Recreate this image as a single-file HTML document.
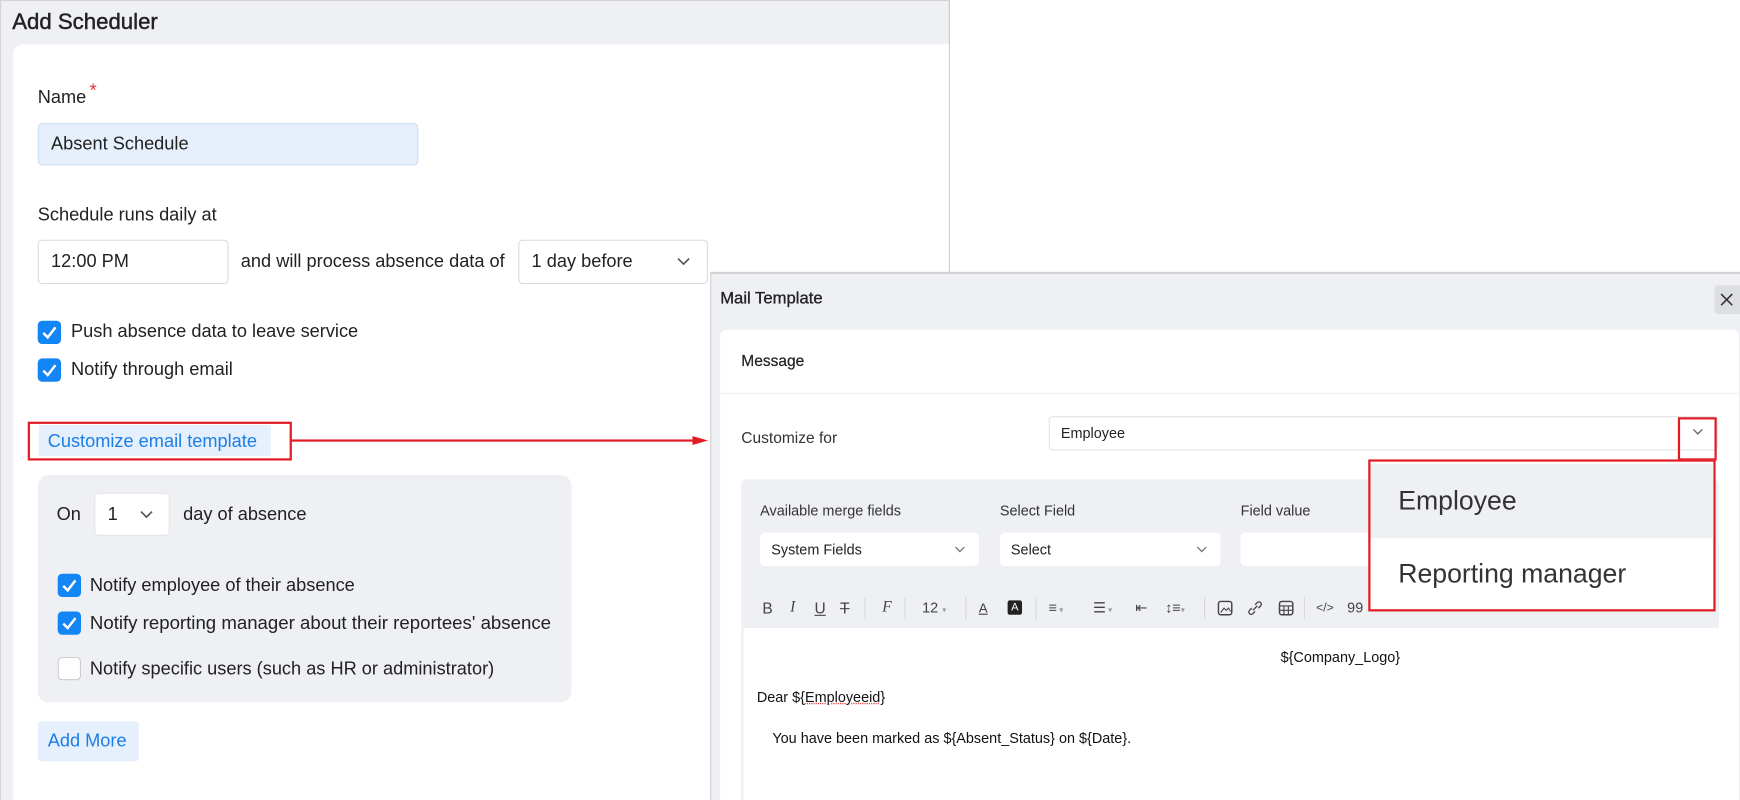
<!DOCTYPE html>
<html><head><meta charset="utf-8"><style>
*{box-sizing:border-box;margin:0;padding:0}
html,body{width:1740px;height:800px;overflow:hidden;background:#fff;font-family:"Liberation Sans",sans-serif;color:#222}
#w{position:absolute;left:0;top:0;width:1568px;height:721px;transform:scale(1.1097);transform-origin:0 0}
.a{position:absolute}
.t{position:absolute;white-space:nowrap;line-height:1;transform:translateY(-50%)}
.L{font-size:16.4px !important}
.cb{position:absolute;width:21px;height:21px;border-radius:4px;background:#1485f5}
.cb svg{position:absolute;left:3px;top:4px}
.cb.off{background:#fff;border:1.5px solid #ccc}
.inp{position:absolute;background:#fff;border:1px solid #d9dbe0;border-radius:4px}
.chev{position:absolute}
.tb{position:absolute;top:540px;font-size:14px;color:#444;line-height:16px}
.sep{position:absolute;top:538px;width:1px;height:20px;background:#d8d8d8}
</style></head><body><div id="w">
<div class="a" style="left:0;top:0;width:856px;height:721px;background:#eef0f4;border-top:1px solid #d4d4d4;border-right:1px solid #c8c8c8;border-left:1px solid #d4d4d4"></div>
<div class="t" style="left:11px;top:20px;font-size:20px;color:#222;-webkit-text-stroke:0.4px #222">Add Scheduler</div>
<div class="a" style="left:12px;top:40px;width:843px;height:681px;background:#fff;border-radius:8px 0 0 0"></div>
<div class="t L" style="left:34px;top:88px">Name<span style="color:#e53935;position:relative;top:-6px;margin-left:3px">*</span></div>
<div class="a" style="left:34px;top:111px;width:343px;height:38px;background:#e6f0fd;border:1px solid #cddcf0;border-radius:4px"></div>
<div class="t L" style="left:46px;top:130px">Absent Schedule</div>
<div class="t L" style="left:34px;top:194px">Schedule runs daily at</div>
<div class="inp" style="left:34px;top:216px;width:172px;height:40px"></div>
<div class="t L" style="left:46px;top:236px">12:00 PM</div>
<div class="t L" style="left:217px;top:236px">and will process absence data of</div>
<div class="inp" style="left:467px;top:216px;width:171px;height:40px"></div>
<div class="t L" style="left:479px;top:236px">1 day before</div>
<svg class="chev" style="left:610px;top:232px" width="12" height="8"><path d="M1 1l5 5 5-5" fill="none" stroke="#555" stroke-width="1.5"/></svg>
<div class="cb" style="left:34px;top:289px"><svg width="15" height="13"><path d="M2 7l4 4 7-9" fill="none" stroke="#fff" stroke-width="2.2"/></svg></div>
<div class="t L" style="left:64px;top:299px">Push absence data to leave service</div>
<div class="cb" style="left:34px;top:323px"><svg width="15" height="13"><path d="M2 7l4 4 7-9" fill="none" stroke="#fff" stroke-width="2.2"/></svg></div>
<div class="t L" style="left:64px;top:333px">Notify through email</div>
<div class="a" style="left:35px;top:383px;width:209px;height:28px;background:#e6f0fd"></div>
<div class="t L" style="left:43px;top:398px;color:#1c7ee6">Customize email template</div>
<div class="a" style="left:25px;top:380px;width:238px;height:35px;border:2px solid #e01b22"></div>
<div class="a" style="left:262px;top:396px;width:368px;height:2px;background:#e01b22"></div>
<svg class="a" style="left:624px;top:390px" width="16" height="14"><path d="M0 3l14 4-14 4z" fill="#e01b22"/></svg>
<div class="a" style="left:34px;top:428px;width:481px;height:205px;background:#eef0f4;border-radius:10px"></div>
<div class="t L" style="left:51px;top:464px">On</div>
<div class="inp" style="left:85px;top:444px;width:68px;height:39px;border-color:#e4e5e8"></div>
<div class="t L" style="left:97px;top:464px">1</div>
<svg class="chev" style="left:126px;top:460px" width="12" height="8"><path d="M1 1l5 5 5-5" fill="none" stroke="#555" stroke-width="1.5"/></svg>
<div class="t L" style="left:165px;top:464px">day of absence</div>
<div class="cb" style="left:52px;top:517px"><svg width="15" height="13"><path d="M2 7l4 4 7-9" fill="none" stroke="#fff" stroke-width="2.2"/></svg></div>
<div class="t L" style="left:81px;top:528px">Notify employee of their absence</div>
<div class="cb" style="left:52px;top:551px"><svg width="15" height="13"><path d="M2 7l4 4 7-9" fill="none" stroke="#fff" stroke-width="2.2"/></svg></div>
<div class="t L" style="left:81px;top:562px;font-size:16.8px !important">Notify reporting manager about their reportees' absence</div>
<div class="cb off" style="left:52px;top:592px"></div>
<div class="t L" style="left:81px;top:603px">Notify specific users (such as HR or administrator)</div>
<div class="a" style="left:34px;top:650px;width:91px;height:36px;background:#e6f0fd;border-radius:3px"></div>
<div class="t L" style="left:43px;top:668px;color:#1c7ee6">Add More</div>

<div class="a" style="left:640px;top:245px;width:928px;height:476px;background:#eef0f4;border-top:2px solid #d2d2d2;border-left:1px solid #d2d2d2"></div>
<div class="t" style="left:649px;top:269px;font-size:15px;-webkit-text-stroke:0.3px #222">Mail Template</div>
<div class="a" style="left:1545px;top:257px;width:23px;height:26px;background:#dddee2;border-radius:3px 0 0 3px"></div>
<svg class="a" style="left:1550px;top:264px" width="12" height="12"><path d="M1 1l10 10M11 1L1 11" stroke="#333" stroke-width="1.4"/></svg>
<div class="a" style="left:649px;top:297px;width:918px;height:424px;background:#fff;border-radius:6px 6px 0 0"></div>
<div class="t" style="left:668px;top:325px;font-size:14px;-webkit-text-stroke:0.2px #222">Message</div>
<div class="a" style="left:649px;top:354px;width:918px;height:1px;background:#eeeff1"></div>
<div class="t" style="left:668px;top:394px;font-size:14px;color:#333">Customize for</div>
<div class="inp" style="left:945px;top:375px;width:603px;height:31px;border-color:#e3e4e7"></div>
<div class="t" style="left:956px;top:390px;font-size:13px">Employee</div>
<svg class="chev" style="left:1525px;top:386px" width="10" height="7"><path d="M1 1l4 4 4-4" fill="none" stroke="#666" stroke-width="1.2"/></svg>
<div class="a" style="left:668px;top:432px;width:881px;height:289px;background:#eef0f4;border-radius:4px 4px 0 0"></div>
<div class="t" style="left:685px;top:460px;font-size:13px;color:#333">Available merge fields</div>
<div class="t" style="left:901px;top:460px;font-size:13px;color:#333">Select Field</div>
<div class="t" style="left:1118px;top:460px;font-size:13px;color:#333">Field value</div>
<div class="a" style="left:685px;top:480px;width:197px;height:30px;background:#fff;border-radius:4px"></div>
<div class="t" style="left:695px;top:495px;font-size:13px">System Fields</div>
<svg class="chev" style="left:860px;top:492px" width="10" height="7"><path d="M1 1l4 4 4-4" fill="none" stroke="#777" stroke-width="1.2"/></svg>
<div class="a" style="left:901px;top:480px;width:199px;height:30px;background:#fff;border-radius:4px"></div>
<div class="t" style="left:911px;top:495px;font-size:13px">Select</div>
<svg class="chev" style="left:1078px;top:492px" width="10" height="7"><path d="M1 1l4 4 4-4" fill="none" stroke="#777" stroke-width="1.2"/></svg>
<div class="a" style="left:1118px;top:480px;width:140px;height:30px;background:#fff;border-radius:4px"></div>
<div class="tb" style="left:687px">B</div>
<div class="tb" style="left:712px;font-family:'Liberation Serif',serif;font-style:italic">I</div>
<div class="tb" style="left:734px;text-decoration:underline">U</div>
<div class="tb" style="left:757px;text-decoration:line-through">T</div>
<div class="sep" style="left:779px"></div>
<div class="tb" style="left:795px;font-family:'Liberation Serif',serif;font-style:italic">F</div>
<div class="sep" style="left:815px"></div>
<div class="tb" style="left:831px;font-size:13px">12 <span style="font-size:7px;color:#999">▾</span></div>
<div class="sep" style="left:870px"></div>
<div class="tb" style="left:882px;font-size:12px;text-decoration:underline">A</div>
<div class="a" style="left:908px;top:541px;width:13px;height:13px;background:#222;border-radius:2px;color:#fff;font-size:10px;text-align:center;line-height:13px">A</div>
<div class="sep" style="left:933px"></div>
<div class="tb" style="left:945px;font-size:13px">≡<span style="font-size:7px;color:#999"> ▾</span></div>
<div class="tb" style="left:985px;font-size:13px">☰<span style="font-size:7px;color:#999"> ▾</span></div>
<div class="tb" style="left:1023px;font-size:13px">⇤</div>
<div class="tb" style="left:1050px;font-size:13px">↕≡<span style="font-size:7px;color:#999">▾</span></div>
<div class="sep" style="left:1085px"></div>
<svg class="a" style="left:1097px;top:541px" width="14" height="14"><rect x="1" y="1" width="12" height="12" rx="2" fill="none" stroke="#444" stroke-width="1.3"/><path d="M3 11l3-4 2 2 2-2 2 3" fill="none" stroke="#444"/></svg>
<svg class="a" style="left:1124px;top:541px" width="14" height="14"><path d="M5 9l4-4M4 7L2 9a2 2 0 003 3l2-2M10 7l2-2a2 2 0 00-3-3L7 4" fill="none" stroke="#444" stroke-width="1.2"/></svg>
<svg class="a" style="left:1152px;top:541px" width="14" height="14"><rect x="1" y="1" width="12" height="12" rx="2" fill="none" stroke="#444" stroke-width="1.3"/><path d="M1 5h12M1 9h12M5 5v8M9 5v8" stroke="#444"/></svg>
<div class="sep" style="left:1175px"></div>
<div class="tb" style="left:1186px;font-size:11px">&lt;/&gt;</div>
<div class="tb" style="left:1214px;font-size:13px">99</div>
<div class="a" style="left:670px;top:566px;width:879px;height:155px;background:#fff"></div>
<div class="t" style="left:1154px;top:592px;font-size:13px;color:#111">${Company_Logo}</div>
<div class="t" style="left:682px;top:628px;font-size:13px;color:#111">Dear ${<span style="text-decoration:underline dotted #e53935">Employeeid</span>}</div>
<div class="t" style="left:696px;top:665px;font-size:13px;color:#111">You have been marked as ${Absent_Status} on ${Date}.</div>
<div class="a" style="left:1512px;top:376px;width:35px;height:39px;border:2px solid #e01b22"></div>
<div class="a" style="left:1233px;top:414px;width:313px;height:137px;background:#fff;border:2px solid #e01b22"></div>
<div class="a" style="left:1235px;top:418px;width:309px;height:67px;background:#eef0f4"></div>
<div class="t" style="left:1260px;top:452px;font-size:24px;color:#333">Employee</div>
<div class="t" style="left:1260px;top:518px;font-size:24px;color:#333">Reporting manager</div>
</div></body></html>
